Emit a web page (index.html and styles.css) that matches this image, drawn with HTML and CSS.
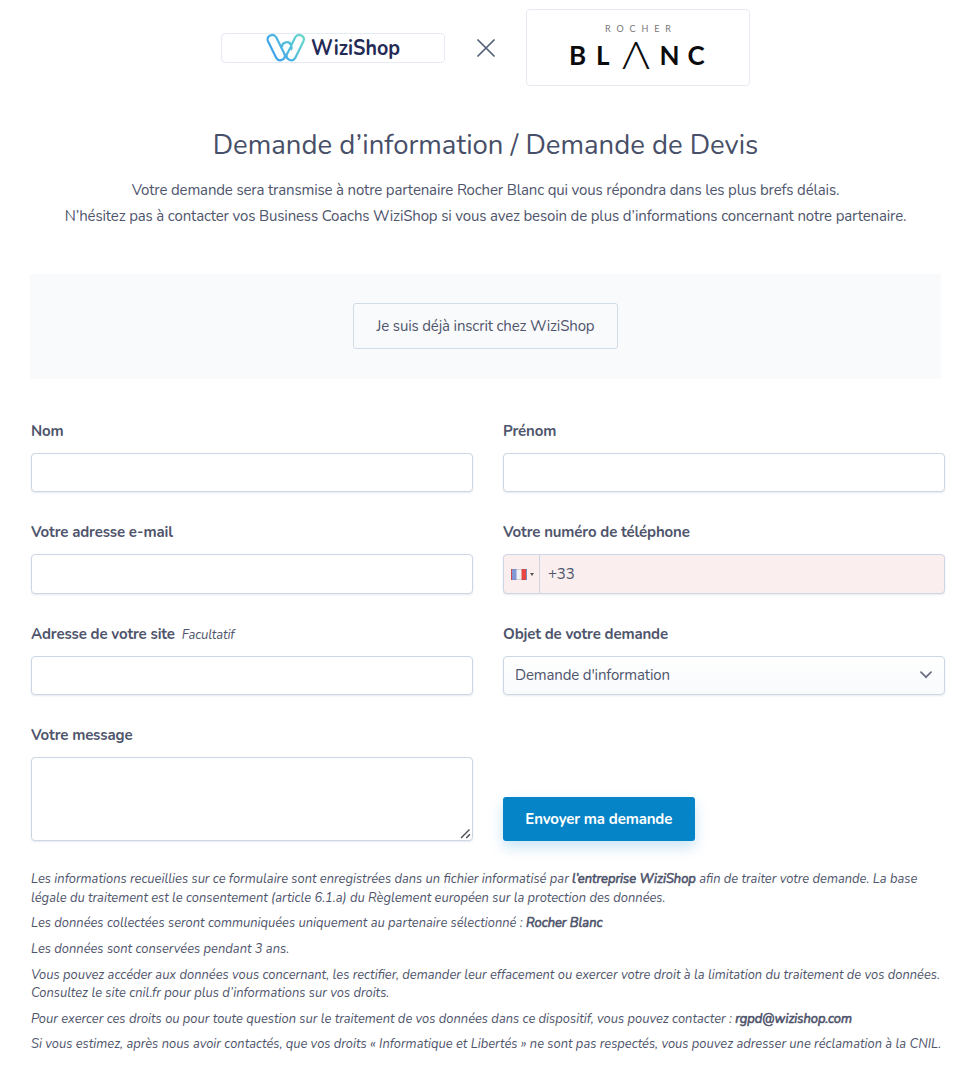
FILE: index.html
```html
<!DOCTYPE html>
<html lang="fr">
  <head>
    <meta charset="UTF-8" />
    <meta name="viewport" content="width=device-width, initial-scale=1.0" />
    <title>Demande d’information / Demande de Devis</title>
    <link rel="stylesheet" href="styles.css">
  </head>
  <body>
    <header class="partners">
      <div class="logo-box">
        <svg class="logo-wizishop" width="136" height="30" viewBox="0 0 136 30">
          <defs>
            <linearGradient id="wizi" gradientUnits="userSpaceOnUse" x1="6" y1="26" x2="36" y2="4">
              <stop offset="0" stop-color="#3a9bf0" />
              <stop offset="1" stop-color="#62d6cb" />
            </linearGradient>
          </defs>
          <g fill="none" stroke="url(#wizi)" stroke-width="2.2" stroke-linejoin="round">
            <path d="M2.9 8 L11.4 25.2 A4.6 4.6 0 0 0 19.6 21.2 L11.1 4 A4.6 4.6 0 0 0 2.9 8 Z" />
            <path d="M26.3 12.3 L30.4 4 A4.6 4.6 0 0 1 38.6 8 L30.1 25.2 A4.6 4.6 0 0 1 21.9 21.2 L26 13.6" />
            <path d="M17 14.2 A4.7 4.7 0 0 1 26.2 12.6 Q27.2 14.8 26 17" />
            <path d="M19.6 21.2 Q20 22.6 21.9 25.2" />
          </g>
          <text class="wizi-name" x="46" y="22" textLength="89" lengthAdjust="spacingAndGlyphs">WiziShop</text>
        </svg>
      </div>
      <svg class="cross" width="18" height="18" viewBox="0 0 18 18">
        <path d="M1 1 L17 17 M17 1 L1 17" />
      </svg>
      <div class="logo-box logo-box-large">
        <svg class="logo-rocher" width="140" height="56" viewBox="0 0 140 56">
          <text class="rocher" x="37" y="12.2" textLength="66" lengthAdjust="spacing">ROCHER</text>
          <g class="blanc">
            <text x="1" y="45">B</text>
            <text x="28" y="45">L</text>
            <text class="peak" x="54" y="49" textLength="28" lengthAdjust="spacingAndGlyphs">Λ</text>
            <text x="91.5" y="45">N</text>
            <text x="119.5" y="45">C</text>
          </g>
        </svg>
      </div>
    </header>

    <section class="intro">
      <h1>Demande d’information / Demande de Devis</h1>
      <p>Votre demande sera transmise à notre partenaire Rocher Blanc qui vous répondra dans les plus brefs délais.</p>
      <p>N’hésitez pas à contacter vos Business Coachs WiziShop si vous avez besoin de plus d’informations concernant notre partenaire.</p>
    </section>

    <div class="already">
      <button type="button" class="btn-outline">Je suis déjà inscrit chez WiziShop</button>
    </div>

    <form class="form">
      <div class="field">
        <label for="nom">Nom</label>
        <input type="text" id="nom" class="control" />
      </div>
      <div class="field">
        <label for="prenom">Prénom</label>
        <input type="text" id="prenom" class="control" />
      </div>
      <div class="field">
        <label for="email">Votre adresse e-mail</label>
        <input type="email" id="email" class="control" />
      </div>
      <div class="field">
        <label for="tel">Votre numéro de téléphone</label>
        <div class="control phone">
          <div class="country">
            <span class="flag"></span>
            <span class="caret"></span>
          </div>
          <input type="tel" id="tel" value="+33" />
        </div>
      </div>
      <div class="field">
        <label for="site">Adresse de votre site <em>Facultatif</em></label>
        <input type="text" id="site" class="control" />
      </div>
      <div class="field">
        <label>Objet de votre demande</label>
        <div class="control select">
          <span>Demande d'information</span>
          <svg width="12" height="8" viewBox="0 0 12 8"><path d="M1 1.2 L6 6.2 L11 1.2" /></svg>
        </div>
      </div>
      <div class="field message-field">
        <label for="message">Votre message</label>
        <textarea id="message" class="control message"></textarea>
        <svg class="grip" width="11" height="11" viewBox="0 0 11 11"><path d="M1 10 L9.5 1.5 M6.2 10 L10 6.2" /></svg>
      </div>
      <div class="field submit">
        <button type="button" class="btn-primary">Envoyer ma demande</button>
      </div>
    </form>

    <footer class="legal">
      <p>Les informations recueillies sur ce formulaire sont enregistrées dans un fichier informatisé par <strong>l’entreprise WiziShop</strong> afin de traiter votre demande. La base<br>légale du traitement est le consentement (article 6.1.a) du Règlement européen sur la protection des données.</p>
      <p>Les données collectées seront communiquées uniquement au partenaire sélectionné : <strong>Rocher Blanc</strong></p>
      <p>Les données sont conservées pendant 3 ans.</p>
      <p>Vous pouvez accéder aux données vous concernant, les rectifier, demander leur effacement ou exercer votre droit à la limitation du traitement de vos données.<br>Consultez le site cnil.fr pour plus d’informations sur vos droits.</p>
      <p>Pour exercer ces droits ou pour toute question sur le traitement de vos données dans ce dispositif, vous pouvez contacter : <strong>rgpd@wizishop.com</strong></p>
      <p>Si vous estimez, après nous avoir contactés, que vos droits « Informatique et Libertés » ne sont pas respectés, vous pouvez adresser une réclamation à la CNIL.</p>
    </footer>
  </body>
</html>
```
FILE: styles.css
```css
* {
  box-sizing: border-box;
}
body {
  margin: 0;
  padding: 9px 33px 0 31px;
  background: #fff;
  color: #4f556c;
  font-family: Nunito, Lato, sans-serif;
  font-size: 15px;
  letter-spacing: -0.15px;
}
.partners {
  display: flex;
  align-items: center;
  justify-content: center;
  gap: 31.5px;
  width: 909px;
  height: 77px;
}
.logo-box {
  display: flex;
  align-items: center;
  justify-content: center;
  width: 224px;
  height: 30px;
  border: 1px solid #e6eaf3;
  border-radius: 4px;
}
.logo-box-large {
  height: 77px;
}
.logo-wizishop,
.logo-rocher {
  flex-shrink: 0;
  overflow: visible;
  letter-spacing: 0;
}
.wizi-name {
  font-size: 22px;
  font-weight: 700;
  fill: #242a56;
}
.cross {
  fill: none;
  stroke: #525f76;
  stroke-width: 1.7;
  stroke-linecap: round;
}
.rocher {
  font-family: Lato, sans-serif;
  font-size: 9px;
  fill: #777;
}
.blanc {
  font-family: Lato, sans-serif;
  font-size: 26px;
  font-weight: 700;
  fill: #0b0b0d;
}
.blanc .peak {
  font-size: 38px;
  font-weight: 300;
}
.intro {
  width: 909px;
  text-align: center;
  white-space: nowrap;
}
.intro h1 {
  margin: 40px 0 13px;
  color: #484f68;
  font-size: 27.5px;
  font-weight: 400;
  letter-spacing: 0;
  line-height: 38px;
}
.intro p {
  margin: 0;
  line-height: 26px;
}
.already {
  display: flex;
  align-items: center;
  justify-content: center;
  width: 911px;
  height: 104.5px;
  margin: 45px 0 41.5px -1px;
  background: #f9fafc;
}
.btn-outline {
  width: 265px;
  height: 46px;
  padding: 0;
  background: transparent;
  border: 1px solid #d2dce6;
  border-radius: 3px;
  color: inherit;
  font: inherit;
  letter-spacing: inherit;
}
.form {
  display: grid;
  grid-template-columns: 442px 442px;
  column-gap: 30px;
  row-gap: 29px;
}
.field label {
  display: block;
  height: 22px;
  margin-bottom: 11px;
  font-weight: 700;
  line-height: 23px;
}
.field label em {
  margin-left: 3px;
  font-size: 13px;
  font-weight: 400;
}
.control {
  display: block;
  width: 100%;
  height: 39.4px;
  padding: 0 11px;
  background: #fff;
  border: 1px solid #cdd6e4;
  border-radius: 4px;
  box-shadow: 0 1px 2px rgba(60, 80, 120, 0.12);
  color: inherit;
  font: inherit;
  letter-spacing: inherit;
}
.phone {
  display: flex;
  padding: 0;
  background: #faeeee;
}
.country {
  display: flex;
  align-items: center;
  gap: 3px;
  width: 36px;
  padding-left: 7px;
  border-right: 1px solid #cdd6e4;
}
.flag {
  width: 16px;
  height: 11px;
  border: 1px solid rgba(90, 90, 120, 0.2);
  background: linear-gradient(90deg, #8299d6 4px, #f0f0f2 5px, #f0f0f2 9px, #ea4643 10px);
}
.caret {
  border: 2px solid transparent;
  border-top: 3px solid #555;
  border-bottom: 0;
}
.phone input {
  flex: 1;
  min-width: 0;
  padding: 0 8px;
  background: transparent;
  border: 0;
  color: inherit;
  font: inherit;
  letter-spacing: inherit;
}
.select {
  display: flex;
  align-items: center;
  justify-content: space-between;
  padding-right: 12px;
  background: linear-gradient(#fff, #f8fafc);
}
.select svg {
  fill: none;
  stroke: #6d7185;
  stroke-width: 1.8;
  stroke-linecap: round;
}
.message-field {
  position: relative;
}
.message {
  height: 84px;
  resize: none;
}
.grip {
  position: absolute;
  right: 2px;
  bottom: 2px;
  fill: none;
  stroke: #4b4b50;
  stroke-width: 1.4;
}
.submit {
  display: flex;
  align-items: flex-end;
}
.btn-primary {
  width: 191.5px;
  height: 44.5px;
  padding: 0;
  background: #0584c8;
  border: 0;
  border-radius: 3px;
  box-shadow: 0 6px 14px rgba(5, 132, 200, 0.22);
  color: #fff;
  font: inherit;
  font-weight: 700;
  letter-spacing: inherit;
}
.legal {
  margin-top: 29.2px;
  font-size: 12.9px;
  font-style: italic;
  letter-spacing: 0;
  line-height: 18.4px;
  white-space: nowrap;
}
.legal p {
  margin: 0 0 7.2px;
}
/* thickened regular, keeps the regular advance widths */
.legal strong {
  font-weight: 400;
  -webkit-text-stroke: 0.6px currentColor;
}
```
